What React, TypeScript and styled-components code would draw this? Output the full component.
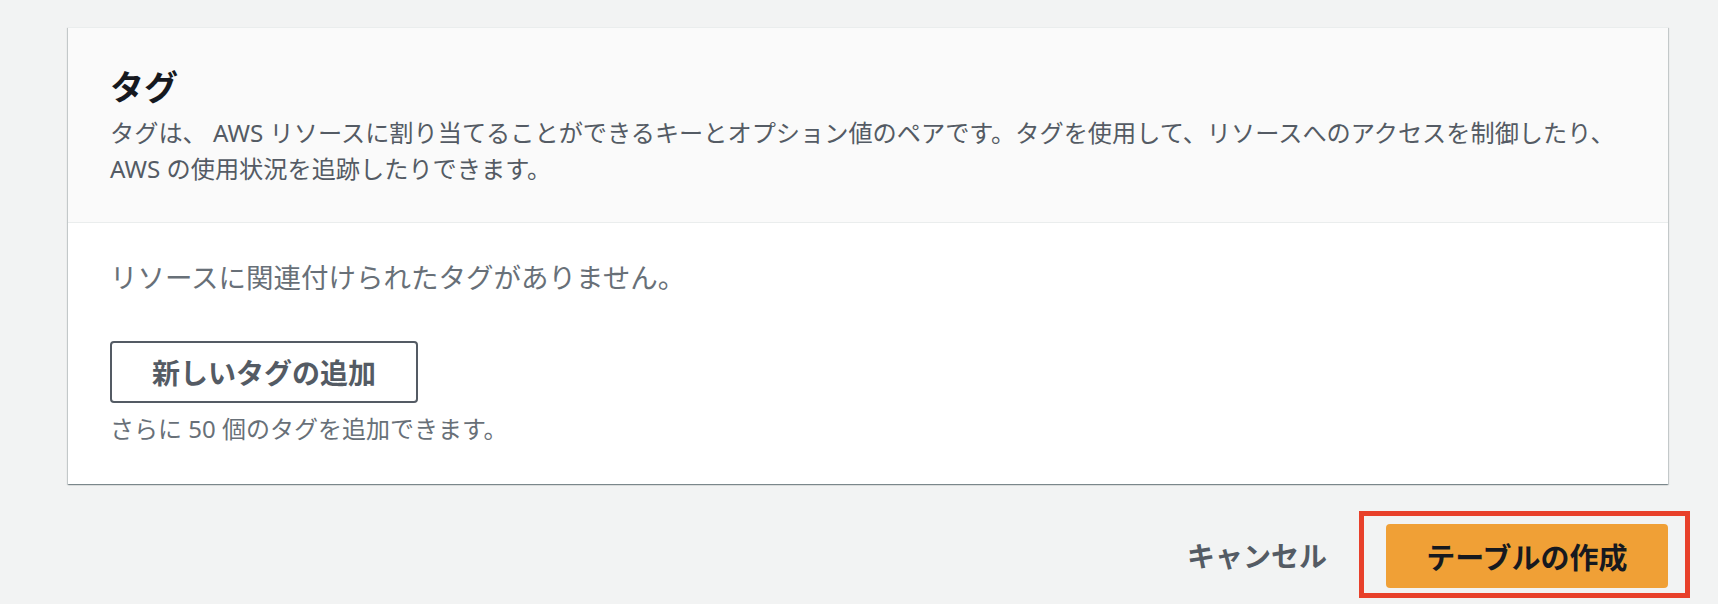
import React from 'react';
import styled, { createGlobalStyle } from 'styled-components';

const GlobalStyle = createGlobalStyle`
  html, body {
    margin: 0;
    padding: 0;
    background: #f2f3f3;
  }
  body {
    font-family: 'Noto Sans', 'Noto Sans CJK JP', sans-serif;
    -webkit-font-smoothing: antialiased;
  }
`;

const Page = styled.div`
  width: 1718px;
  height: 604px;
  box-sizing: border-box;
  padding: 27px 0 0 68px;
  overflow: hidden;
`;

const Card = styled.section`
  width: 1600px;
  background: #ffffff;
  border-top: 1px solid #eaeded;
  box-shadow: 0 1px 1px 0 rgba(0, 28, 36, 0.3), 1px 1px 1px 0 rgba(0, 28, 36, 0.15),
    -1px 1px 1px 0 rgba(0, 28, 36, 0.15);
`;

const CardHeader = styled.header`
  background: #fafafa;
  border-bottom: 1px solid #eaeded;
  padding: 39px 42px 35px 42px;
`;

const Title = styled.h2`
  margin: 0;
  font-size: 34px;
  line-height: 40px;
  font-weight: 700;
  color: #16191f;
`;

const Description = styled.p`
  margin: 8px 0 0;
  font-size: 24.2px;
  line-height: 36px;
  color: #545b64;
`;

const CardBody = styled.div`
  padding: 37px 42px 40px 42px;
`;

const EmptyText = styled.p`
  margin: 0;
  font-size: 27.5px;
  line-height: 36px;
  color: #687078;
`;

const OutlineButton = styled.button`
  margin-top: 45px;
  height: 62px;
  box-sizing: border-box;
  padding: 0 40px;
  border: 2px solid #545b64;
  border-radius: 4px;
  background: #ffffff;
  color: #545b64;
  font-family: inherit;
  font-size: 28px;
  font-weight: 700;
  cursor: pointer;
`;

const Hint = styled.p`
  margin: 11px 0 0;
  font-size: 24px;
  line-height: 30px;
  color: #687078;
`;

const Footer = styled.div`
  display: flex;
  justify-content: flex-end;
  align-items: center;
  width: 1622px;
  margin-top: 27px;
  gap: 32px;
`;

const LinkButton = styled.button`
  border: none;
  background: transparent;
  padding: 0;
  color: #545b64;
  font-family: inherit;
  font-size: 28px;
  font-weight: 700;
  cursor: pointer;
`;

const Highlight = styled.div`
  display: flex;
  border: 5px solid #e8402a;
  padding: 8px 17px 5px 22px;
`;

const PrimaryButton = styled.button`
  width: 282px;
  height: 64px;
  border: none;
  border-radius: 4px;
  background: #f0a036;
  color: #16191f;
  font-family: inherit;
  font-size: 29px;
  font-weight: 700;
  cursor: pointer;
`;

export default function App() {
  return (
    <>
      <GlobalStyle />
      <Page>
        <Card>
          <CardHeader>
            <Title>タグ</Title>
            <Description>
              タグは、 AWS リソースに割り当てることができるキーとオプション値のペアです。タグを使用して、リソースへのアクセスを制御したり、 AWS の使用状況を追跡したりできます。
            </Description>
          </CardHeader>
          <CardBody>
            <EmptyText>リソースに関連付けられたタグがありません。</EmptyText>
            <OutlineButton>新しいタグの追加</OutlineButton>
            <Hint>さらに 50 個のタグを追加できます。</Hint>
          </CardBody>
        </Card>
        <Footer>
          <LinkButton>キャンセル</LinkButton>
          <Highlight>
            <PrimaryButton>テーブルの作成</PrimaryButton>
          </Highlight>
        </Footer>
      </Page>
    </>
  );
}
